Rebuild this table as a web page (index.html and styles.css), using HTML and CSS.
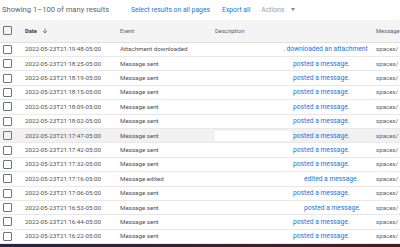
FILE: index.html
```html
<!DOCTYPE html>
<html lang="en">
<head>
    <meta charset="UTF-8">
    <title>Audit log</title>
    <link rel="stylesheet" href="styles.css">
</head>
<body>

    <div class="toolbar">
        <span class="count">Showing 1–100 of many results</span>
        <a class="link select-all">Select results on all pages</a>
        <a class="link export">Export all</a>
        <span class="actions">Actions <span class="caret"></span></span>
    </div>

    <div class="log-table">
        <div class="log-row head">
            <div class="cell check"><span class="box"></span></div>
            <div class="cell date">Date
                <svg class="sort" width="6" height="6" viewBox="0 0 12 12"><path d="M6 1v9M2 6l4 4 4-4" fill="none" stroke="#5f6368" stroke-width="1.6"/></svg>
            </div>
            <div class="cell">Event</div>
            <div class="cell">Description</div>
            <div class="cell">Message</div>
        </div>
        <div id="logRows"></div>
    </div>

    <div class="taskbar"></div>

    <script>
        // Rows of the log: time, event, hidden name width, text
        const rows = [
            ['19:48', 'Attachment downloaded', 68, '. downloaded an attachment'],
            ['18:25', 'Message sent', 78, 'posted a message.'],
            ['18:19', 'Message sent', 78, 'posted a message.'],
            ['18:15', 'Message sent', 78, 'posted a message.'],
            ['18:09', 'Message sent', 78, 'posted a message.'],
            ['18:02', 'Message sent', 78, 'posted a message.'],
            ['17:47', 'Message sent', 78, 'posted a message.'],
            ['17:42', 'Message sent', 78, 'posted a message.'],
            ['17:32', 'Message sent', 78, 'posted a message.'],
            ['17:16', 'Message edited', 89, 'edited a message.'],
            ['17:06', 'Message sent', 78, 'posted a message.'],
            ['16:53', 'Message sent', 89, 'posted a message.'],
            ['16:44', 'Message sent', 78, 'posted a message.'],
            ['16:22', 'Message sent', 78, 'posted a message.']
        ];

        const container = document.getElementById('logRows');
        rows.forEach((item, i) => {
            const row = document.createElement('div');
            row.classList.add('log-row');
            if (i === 6) row.classList.add('hover');
            row.innerHTML = `
                <div class="cell check"><span class="box"></span></div>
                <div class="cell">2022-05-23T21:${item[0]}-05:00</div>
                <div class="cell">${item[1]}</div>
                <div class="cell desc"><span class="redacted" style="width: ${item[2]}px"></span>${item[3]}</div>
                <div class="cell msg">spaces/</div>
            `;
            container.appendChild(row);
        });
    </script>
</body>
</html>
```

FILE: styles.css
```css
body {
    font-family: 'Roboto', sans-serif;
    margin: 0;
    padding: 0;
    background-color: #fff;
    width: 400px;
    height: 247px;
    overflow: hidden;
    display: flex;
    flex-direction: column;
}

.toolbar {
    height: 20px;
    display: flex;
    align-items: center;
    padding-left: 2px;
    font-size: 7.6px;
    color: #5f6368;
    white-space: nowrap;
}

.toolbar .link {
    color: #1a73e8;
    font-size: 6.8px;
}

.toolbar .select-all {
    margin-left: 22px;
}

.toolbar .export {
    margin-left: 12px;
}

.toolbar .actions {
    margin-left: 11px;
    font-size: 6.8px;
    color: #9aa0a6;
    display: flex;
    align-items: center;
}

.caret {
    display: inline-block;
    margin-left: 7px;
    border-left: 2.5px solid transparent;
    border-right: 2.5px solid transparent;
    border-top: 3px solid #80868b;
}

.log-table {
    flex: 1;
    font-size: 6.2px;
    color: #4d5156;
}

.log-row {
    display: grid;
    grid-template-columns: 25px 95px 95px 161px 1fr;
    height: 14.4px;
    align-items: center;
    border-bottom: 1px solid #e8e8e8;
    box-sizing: border-box;
    white-space: nowrap;
    overflow: hidden;
}

.log-row.head {
    height: 23px;
    background-color: #f4f4f4;
    color: #5f6368;
    font-size: 5.8px;
    border-bottom: 1px solid #e0e0e0;
}

.log-row.hover {
    background-color: #f1f1f1;
}

.cell {
    overflow: hidden;
}

.cell.date {
    font-weight: bold;
    color: #3c4043;
    display: flex;
    align-items: center;
}

.sort {
    margin-left: 5px;
}

.check {
    padding-left: 3px;
    display: flex;
}

.box {
    width: 7px;
    height: 7px;
    border: 1.5px solid #6f7378;
    border-radius: 1px;
}

.desc {
    color: #1a73e8;
    font-size: 6.7px;
    display: flex;
    align-items: center;
}

.redacted {
    display: inline-block;
    height: 10px;
    flex-shrink: 0;
}

.log-row.hover .redacted {
    background-color: #fff;
    border-radius: 6px;
    margin-left: -8px;
    padding-left: 8px;
}

.msg {
    color: #5f6368;
}

.taskbar {
    height: 3px;
    background: linear-gradient(90deg, #2a2440, #3a2130 60%, #4a1c1c);
}
```
